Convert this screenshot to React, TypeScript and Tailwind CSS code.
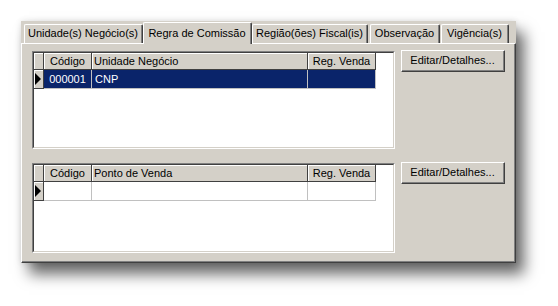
// Classic Win2000-style tab dialog with two data grids and "Editar/Detalhes..." buttons.

const font = { fontFamily: '"Liberation Sans", Arial, sans-serif' };

type Col = { title: string; width: string; align: "left" | "center" };

const raised =
  "border border-t-white border-l-white border-r-[#404040] border-b-[#404040]";

function Tab({
  label,
  width,
  active,
  className = "",
}: {
  label: string;
  width: string;
  active?: boolean;
  className?: string;
}) {
  return (
    <div
      className={`${width} ${className} flex items-center justify-center rounded-t-[2px] border-l border-t border-r border-l-white border-t-white border-r-[#404040] bg-[#d4d0c8] text-[11px] leading-none text-black ${
        active ? "relative z-10 -mb-px h-[22px]" : "h-[19px]"
      }`}
    >
      <div className="flex h-full w-full items-center justify-center border-r border-r-[#808080] pb-px">
        {label}
      </div>
    </div>
  );
}

function Button() {
  return (
    <div className={`${raised} -mt-px ml-[6px] h-[22px] w-[104px] bg-[#d4d0c8]`}>
      <div className="flex h-full w-full items-center justify-center border-r border-b border-r-[#808080] border-b-[#808080] pb-px text-[11px] text-black">
        Editar/Detalhes...
      </div>
    </div>
  );
}

function Grid({
  cols,
  row,
  selected,
  height,
}: {
  cols: Col[];
  row: string[];
  selected?: boolean;
  height: string;
}) {
  return (
    <div
      className={`${height} w-[363px] border border-t-[#808080] border-l-[#808080] border-r-white border-b-white`}
    >
      <div className="h-full w-full overflow-hidden border border-t-[#404040] border-l-[#404040] border-r-[#d4d0c8] border-b-[#d4d0c8] bg-white">
        {/* header */}
        <div className="flex h-[17px]">
          <div className="h-full w-[10px] border-r border-b border-[#404040] bg-[#d4d0c8] shadow-[inset_1px_1px_0_#fff]" />
          {cols.map((c) => (
            <div
              key={c.title}
              className={`${c.width} flex h-full items-center border-r border-b border-[#404040] bg-[#d4d0c8] text-[11px] leading-none text-black shadow-[inset_1px_1px_0_#fff] ${
                c.align === "center" ? "justify-center" : "pl-[2px]"
              }`}
            >
              {c.title}
            </div>
          ))}
        </div>
        {/* data row */}
        <div className="flex h-[19px]">
          <div className="flex h-full w-[10px] items-center border-r border-b border-[#404040] bg-[#d4d0c8] pl-[1px] shadow-[inset_1px_1px_0_#fff]">
            <div className="h-0 w-0 border-y-[6px] border-l-[6px] border-y-transparent border-l-black" />
          </div>
          {cols.map((c, i) => (
            <div
              key={c.title}
              className={`${c.width} flex h-full items-center border-r border-b border-[#c0c0c0] text-[11px] leading-none ${
                selected ? "bg-[#0a246a] text-white" : "bg-white text-black"
              } ${c.align === "center" ? "justify-center" : "pl-[3px]"}`}
            >
              {row[i]}
            </div>
          ))}
        </div>
      </div>
    </div>
  );
}

export default function App() {
  return (
    <div className="h-[306px] w-[558px] bg-white pl-[21px] pt-[21px]" style={font}>
      <div className="flex h-[242px] w-[495px] flex-col bg-[#d4d0c8] shadow-[8px_11px_14px_rgba(0,0,0,0.6),0_0_6px_rgba(0,0,0,0.12)]">
        {/* tab strip */}
        <div className="flex h-[22px] shrink-0 items-end">
          <Tab label="Unidade(s) Negócio(s)" width="w-[119px]" className="ml-[3px]" />
          <Tab label="Regra de Comissão" width="w-[109px]" active />
          <Tab label="Região(ões) Fiscal(is)" width="w-[116px]" />
          <Tab label="Observação" width="w-[70px]" className="ml-[2px]" />
          <Tab label="Vigência(s)" width="w-[68px]" className="ml-px" />
        </div>

        {/* tab panel */}
        <div className="flex-1 border border-t-white border-l-white border-r-[#404040] border-b-[#404040]">
          <div className="h-full border-r border-b border-r-[#808080] border-b-[#808080] pl-[10px] pt-[7px]">
            <div className="flex items-start">
              <Grid
                height="h-[98px]"
                selected
                cols={[
                  { title: "Código", width: "w-[48px]", align: "center" },
                  { title: "Unidade Negócio", width: "w-[216px]", align: "left" },
                  { title: "Reg. Venda", width: "w-[68px]", align: "center" },
                ]}
                row={["000001", "CNP", ""]}
              />
              <Button />
            </div>
            <div className="mt-[14px] flex items-start">
              <Grid
                height="h-[90px]"
                cols={[
                  { title: "Código", width: "w-[48px]", align: "center" },
                  { title: "Ponto de Venda", width: "w-[216px]", align: "left" },
                  { title: "Reg. Venda", width: "w-[68px]", align: "center" },
                ]}
                row={["", "", ""]}
              />
              <Button />
            </div>
          </div>
        </div>
      </div>
    </div>
  );
}
